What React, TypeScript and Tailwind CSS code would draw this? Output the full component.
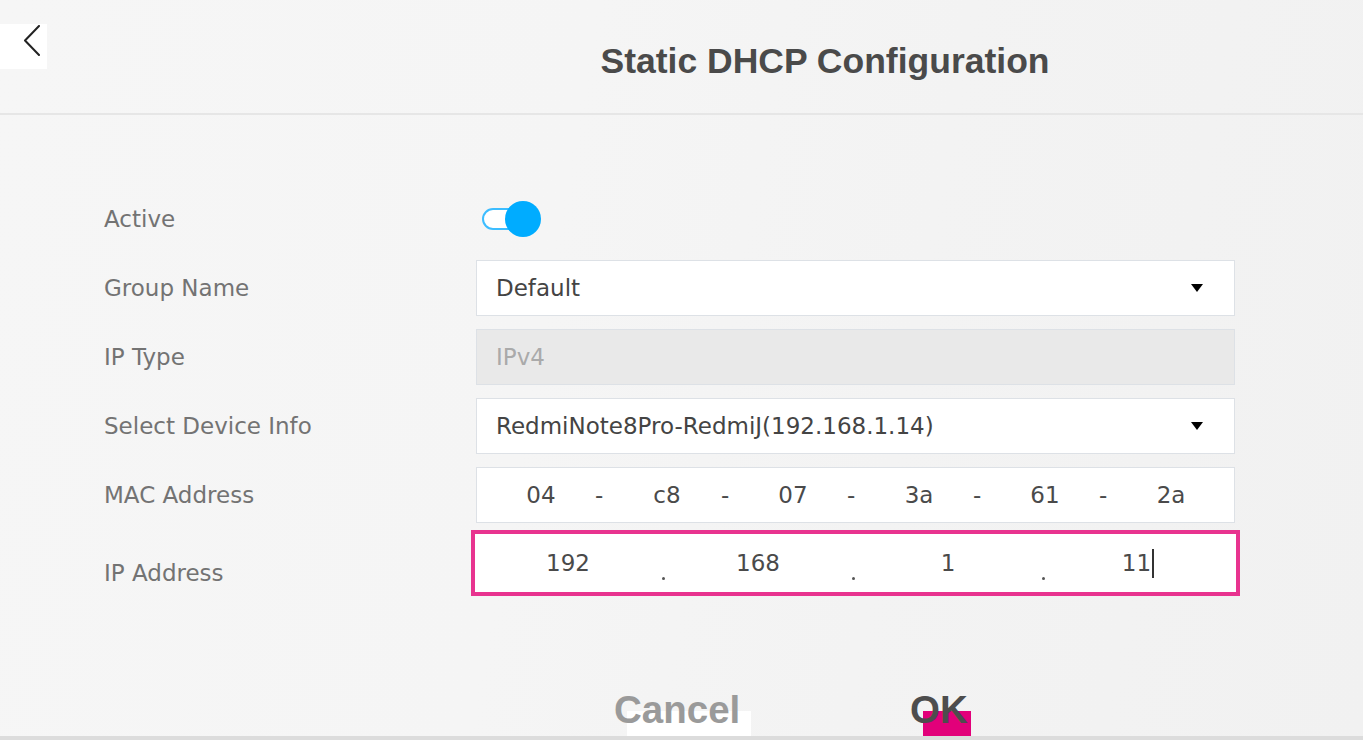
import { useState } from "react";

// static dhcp -lomake: otsikko, kentät ja alareunan napit

const body = "font-['DejaVu_Sans','Noto_Sans',sans-serif]";
const heavy = "font-['Liberation_Sans',Arial,sans-serif] font-bold";

const mac = ["04", "c8", "07", "3a", "61", "2a"];
const ip = ["192", "168", "1", "11"];

function Caret() {
  return (
    <svg width="12" height="10" viewBox="0 0 12 10" aria-hidden>
      <path d="M0 1 H12 L6 9 Z" fill="#000" />
    </svg>
  );
}

function Label({ children, className = "" }: { children: React.ReactNode; className?: string }) {
  return <div className={`text-[23px] text-[#737373] ${className}`}>{children}</div>;
}

export default function App() {
  const [active, setActive] = useState(true);

  return (
    <div
      className={`${body} h-[740px] w-full overflow-hidden flex flex-col bg-[linear-gradient(100deg,#f6f6f6_0%,#f5f5f5_40%,#f3f3f3_65%,#f1f1f1_100%)]`}
    >
      {/* yläpalkki */}
      <header className="h-[115px] shrink-0 flex border-b-2 border-[#e6e6e6]">
        <button className="mt-[24px] h-[45px] w-[47px] bg-white flex items-start pl-[23px] pt-[1px]">
          <svg width="18" height="31" viewBox="0 0 18 31" aria-hidden>
            <path d="M16 1 L2 15.5 L16 30" fill="none" stroke="#222" strokeWidth="2" strokeLinecap="round" strokeLinejoin="round" />
          </svg>
        </button>
        <div className="flex-1 flex justify-center pl-[240px] pt-[44px]">
          <h1 className={`${heavy} text-[35.5px] leading-none text-[#4a4a4a]`}>Static DHCP Configuration</h1>
        </div>
      </header>

      {/* kentät */}
      <div className="ml-[104px] mt-[76px] grid grid-cols-[372px_759px] gap-y-[13px]">
        <Label className="h-[56px] flex items-center">Active</Label>
        <div className="h-[56px] flex items-center pl-[6px]">
          <button onClick={() => setActive(!active)} className="flex items-center">
            <span className="h-[22px] w-[38px] rounded-full border-2 border-[#3dbdff] bg-white" />
            <span className="h-[36px] w-[36px] -ml-[15px] rounded-full bg-[#00acff]" />
          </button>
        </div>

        <Label className="h-[56px] flex items-center">Group Name</Label>
        <div className="h-[56px] bg-white border border-[#dde1e6] flex items-center justify-between pl-[19px] pr-[31px] text-[23px] text-[#444]">
          <span>Default</span>
          <Caret />
        </div>

        <Label className="h-[56px] flex items-center">IP Type</Label>
        <div className="h-[56px] bg-[#e9e9e9] border border-[#dde1e6] flex items-center pl-[19px] text-[23px] text-[#aaa]">
          IPv4
        </div>

        <Label className="h-[56px] flex items-center">Select Device Info</Label>
        <div className="h-[56px] bg-white border border-[#dde1e6] flex items-center justify-between pl-[19px] pr-[31px] text-[23px] text-[#444]">
          <span>RedmiNote8Pro-RedmiJ(192.168.1.14)</span>
          <Caret />
        </div>

        <Label className="h-[56px] flex items-center">MAC Address</Label>
        <div className="h-[56px] bg-white border border-[#dde1e6] flex items-center text-[23px] text-[#4a4a4a]">
          {mac.map((m, i) => (
            <div key={m} className="flex">
              <span className="w-[118px] pl-[10px] text-center">{m}</span>
              {i < mac.length - 1 && <span className="w-[8px] text-center">-</span>}
            </div>
          ))}
        </div>

        <Label className="h-[66px] -mt-[6px] pt-[26px]">IP Address</Label>
        <div className="h-[66px] -mt-[6px] -mx-[5px] bg-white border-4 border-[#e8338f] flex text-[23px] text-[#4a4a4a]">
          {ip.map((p, i) => (
            <div key={i} className="flex">
              <span className="w-[186px] flex items-center justify-center">
                {p}
                {i === ip.length - 1 && <span className="ml-[1px] h-[29px] w-[2px] bg-[#333]" />}
              </span>
              {i < ip.length - 1 && (
                <span className="w-[4px] flex items-end justify-center pb-[12px]">
                  <span className="h-[3px] w-[3px] rounded-full bg-[#555]" />
                </span>
              )}
            </div>
          ))}
        </div>
      </div>

      {/* napit */}
      <div className="mt-[95px] ml-[614px] flex gap-[159px]">
        <button className="flex flex-col items-start">
          <span className={`${heavy} relative z-10 text-[38.5px] leading-none text-[#9a9a9a] -mb-[19px]`}>Cancel</span>
          <span className="ml-[13px] h-[25px] w-[124px] bg-white" />
        </button>
        <button className="flex flex-col items-start">
          <span className={`${heavy} relative z-10 text-[38.5px] leading-none text-[#4d4d4d] -mb-[19px]`}>OK</span>
          <span className="ml-[13px] h-[25px] w-[48px] bg-[#e2007a]" />
        </button>
      </div>
      <div className="mt-auto h-[5px] shrink-0 bg-[#dcdcdc]" />
    </div>
  );
}
